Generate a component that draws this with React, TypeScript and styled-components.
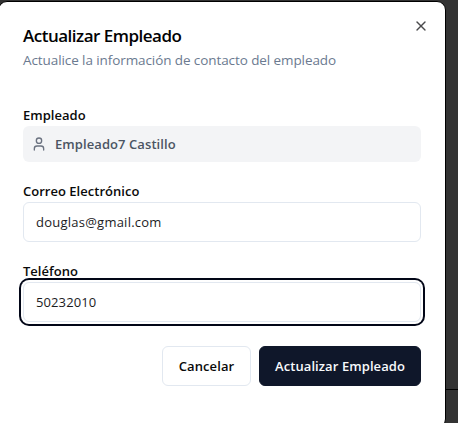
import React from "react";
import styled, { createGlobalStyle } from "styled-components";
import { User, X } from "lucide-react";

const GlobalStyle = createGlobalStyle`
  *, *::before, *::after { box-sizing: border-box; }
  body {
    margin: 0;
    overflow: hidden;
    background: #333333;
    font-family: "Open Sans", "Noto Sans", sans-serif;
  }
`;

const Backdrop = styled.div`
  height: 423px;
  overflow: hidden;
  padding-top: 1px;
  background: linear-gradient(#000, #000) right 0 top 389px / 14px 1px no-repeat, #333333;
`;

const Dialog = styled.section`
  position: relative;
  width: 448px;
  height: 427px;
  margin-left: -2px;
  padding: 25px 24px 0;
  border: 1px solid #000;
  border-radius: 9px;
  background: #fff;
`;

const CloseButton = styled.button`
  position: absolute;
  top: 16px;
  right: 16px;
  display: flex;
  padding: 0;
  border: 0;
  background: none;
  color: #4a4a4c;
`;

const Title = styled.h2`
  margin: 0;
  font-size: 17px;
  font-weight: 600;
  line-height: 18px;
  letter-spacing: -0.5px;
  color: #020203;
`;

const Subtitle = styled.p`
  margin: 5px 0 0;
  font-size: 13.5px;
  line-height: 20px;
  letter-spacing: -0.09px;
  color: #6b7a90;
`;

const Form = styled.form`
  display: flex;
  flex-direction: column;
  margin-top: 36px;
`;

const Field = styled.div<{ $gap: number }>`
  display: flex;
  flex-direction: column;
  margin-bottom: ${(p) => p.$gap}px;
`;

const Label = styled.label`
  height: 20px;
  font-size: 13px;
  font-weight: 600;
  line-height: 18px;
  letter-spacing: 0.02px;
  color: #0a0a0a;
`;

const EmployeeBox = styled.div`
  display: flex;
  align-items: center;
  gap: 8px;
  height: 36px;
  padding: 0 8px;
  border-radius: 6px;
  background: #f3f4f6;
  color: #6b7280;
`;

const EmployeeName = styled.span`
  font-size: 13px;
  font-weight: 600;
  letter-spacing: 0.08px;
  color: #4b5563;
`;

const Input = styled.input<{ $focused?: boolean; $tracking?: number }>`
  width: 100%;
  height: 40px;
  padding: 0 12px;
  border: 1px solid #e2e8f0;
  border-radius: 6px;
  outline: none;
  background: #fff;
  box-shadow: ${(p) => (p.$focused ? "0 0 0 2px #fff, 0 0 0 4px #020617" : "none")};
  font-family: inherit;
  font-size: 13px;
  letter-spacing: ${(p) => p.$tracking ?? 0}px;
  color: #1c1c1e;
`;

const Actions = styled.footer`
  display: flex;
  justify-content: flex-end;
  gap: 8px;
`;

const Button = styled.button<{ $primary?: boolean }>`
  width: ${(p) => (p.$primary ? 162 : 89)}px;
  height: 40px;
  padding: 0;
  border: 1px solid ${(p) => (p.$primary ? "#0f172a" : "#e2e8f0")};
  border-radius: 6px;
  background: ${(p) => (p.$primary ? "#0f172a" : "#fff")};
  color: ${(p) => (p.$primary ? "#f8fafc" : "#0a0a0a")};
  font-family: inherit;
  font-size: 13px;
  font-weight: 600;
  letter-spacing: 0.08px;
  white-space: nowrap;
`;

export default function App() {
  return (
    <>
      <GlobalStyle />
      <Backdrop>
        <Dialog role="dialog" aria-labelledby="dialog-title">
          <Title id="dialog-title">Actualizar Empleado</Title>
          <Subtitle>Actualice la información de contacto del empleado</Subtitle>
          <CloseButton aria-label="Cerrar">
            <X size={16} strokeWidth={2} />
          </CloseButton>
          <Form>
            <Field $gap={20}>
              <Label>Empleado</Label>
              <EmployeeBox>
                <User size={16} />
                <EmployeeName>Empleado7 Castillo</EmployeeName>
              </EmployeeBox>
            </Field>
            <Field $gap={20}>
              <Label htmlFor="email">Correo Electrónico</Label>
              <Input id="email" defaultValue="douglas@gmail.com" $tracking={0.24} />
            </Field>
            <Field $gap={24}>
              <Label htmlFor="phone">Teléfono</Label>
              <Input id="phone" defaultValue="50232010" $tracking={0.1} $focused />
            </Field>
            <Actions>
              <Button type="button">Cancelar</Button>
              <Button type="button" $primary>Actualizar Empleado</Button>
            </Actions>
          </Form>
        </Dialog>
      </Backdrop>
    </>
  );
}
